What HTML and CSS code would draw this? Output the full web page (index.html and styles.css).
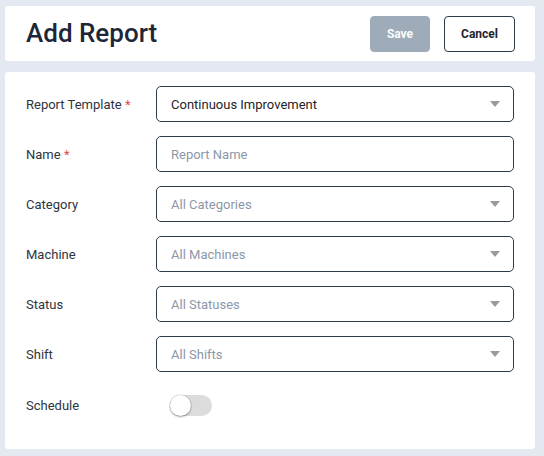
FILE: index.html
```html
<!DOCTYPE html>
<html>
<head>
<meta charset="utf-8">
<link rel="stylesheet" href="styles.css">
</head>
<body>
<div class="page">
  <div class="card header">
    <h1 class="title">Add Report</h1>
    <div class="actions">
      <button class="btn btn-save">Save</button>
      <button class="btn btn-cancel">Cancel</button>
    </div>
  </div>
  <div class="card form">
    <div class="row">
      <label class="label">Report Template <span class="req">*</span></label>
      <div class="field select"><span class="value">Continuous Improvement</span><span class="caret"></span></div>
    </div>
    <div class="row">
      <label class="label">Name <span class="req">*</span></label>
      <div class="field"><span class="placeholder">Report Name</span></div>
    </div>
    <div class="row">
      <label class="label">Category</label>
      <div class="field select"><span class="placeholder">All Categories</span><span class="caret"></span></div>
    </div>
    <div class="row">
      <label class="label">Machine</label>
      <div class="field select"><span class="placeholder">All Machines</span><span class="caret"></span></div>
    </div>
    <div class="row">
      <label class="label">Status</label>
      <div class="field select"><span class="placeholder">All Statuses</span><span class="caret"></span></div>
    </div>
    <div class="row">
      <label class="label">Shift</label>
      <div class="field select"><span class="placeholder">All Shifts</span><span class="caret"></span></div>
    </div>
    <div class="row row-toggle">
      <label class="label">Schedule</label>
      <div class="toggle-wrap"><span class="toggle"><span class="knob"></span></span></div>
    </div>
  </div>
</div>
</body>
</html>
```
FILE: styles.css
```css
* { box-sizing: border-box; }
html, body { margin: 0; padding: 0; }
body {
  background: #e4e8f1;
  font-family: Roboto, "Liberation Sans", Arial, sans-serif;
  width: 544px;
  height: 456px;
  overflow: hidden;
}
.page {
  padding: 6px 9px 0 5px;
  display: flex;
  flex-direction: column;
  gap: 11px;
}
.card {
  background: #fff;
  border-radius: 3px;
}
.header {
  height: 55px;
  display: flex;
  align-items: center;
  justify-content: space-between;
  padding: 0 20px 0 21px;
}
.title {
  margin: 0;
  font-size: 26px;
  font-weight: 500;
  color: #1d2739;
  letter-spacing: 0;
  position: relative;
  top: -1px;
}
.actions {
  display: flex;
  gap: 14px;
  align-items: center;
}
.btn {
  height: 36px;
  border-radius: 4px;
  font-family: Roboto, "Liberation Sans", Arial, sans-serif;
  font-size: 12px;
  font-weight: 700;
  padding: 0;
  cursor: pointer;
}
.btn-save {
  width: 60px;
  background: #9eacb9;
  border: 1px solid #9eacb9;
  color: #fafbfc;
}
.btn-cancel {
  width: 71px;
  background: #fff;
  border: 1px solid #2e3b47;
  color: #1d2530;
}
.form {
  height: 377px;
  padding: 14px 21px 0 21px;
  display: flex;
  flex-direction: column;
  gap: 14px;
}
.row {
  display: flex;
  align-items: center;
  height: 36px;
}
.label {
  width: 130px;
  flex: none;
  font-size: 13px;
  color: #2e3440;
}
.req { color: #e5484d; }
.field {
  flex: 1;
  height: 36px;
  border: 1px solid #2f3c47;
  border-radius: 5px;
  display: flex;
  align-items: center;
  justify-content: space-between;
  padding: 0 13px 0 14px;
  font-size: 13px;
}
.value { color: #1f2329; }
.placeholder { color: #8c98a8; }
.caret {
  width: 0;
  height: 0;
  border-left: 5.5px solid transparent;
  border-right: 5.5px solid transparent;
  border-top: 6px solid #9a9a9a;
}
.row-toggle { margin-top: 1px; }
.toggle-wrap {
  padding-left: 14px;
  display: flex;
  align-items: center;
}
.toggle {
  position: relative;
  width: 42px;
  height: 21px;
  border-radius: 11px;
  background: #dcdcdc;
  display: block;
}
.knob {
  position: absolute;
  left: 0;
  top: 0;
  width: 21px;
  height: 21px;
  border-radius: 50%;
  background: #fff;
  box-shadow: 0 1px 2px rgba(0,0,0,0.35), 0 0 0 0.5px rgba(0,0,0,0.15);
}
```
